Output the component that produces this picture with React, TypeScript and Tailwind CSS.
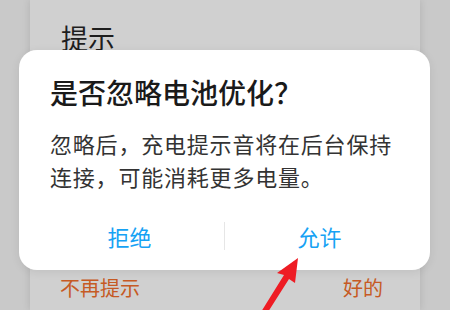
export default function App() {
  return (
    <div
      className="relative w-[450px] h-[310px] overflow-hidden bg-[#c9c9c9]"
      style={{ fontFamily: '"Noto Sans CJK SC", "Noto Sans", sans-serif' }}
    >
      {/* dialog behind */}
      <div className="ml-[30px] w-[390px] h-full bg-[#d0d0d0] shadow-[0_0_8px_rgba(0,0,0,0.12)] flex flex-col justify-between">
        <div className="pl-[31px] pt-[18px] text-[27px] leading-[40px] text-[#1e1e1e]">提示</div>
        <div className="flex justify-between pl-[30px] pr-[37px] pb-[9px] text-[20px] leading-[26px] text-[#c65a24]">
          <span>不再提示</span>
          <span>好的</span>
        </div>
      </div>

      {/* front dialog */}
      <div className="absolute left-[19px] top-[50px] w-[411px] h-[220px] rounded-[18px] bg-white flex flex-col shadow-[0_2px_10px_rgba(0,0,0,0.08)]">
        <div className="pl-[31px] pt-[23px] text-[28px] leading-[38px] font-medium text-[#1a1a1a]">是否忽略电池优化？</div>
        <div className="pl-[31px] pr-[20px] mt-[16px] text-[22px] leading-[33px] tracking-[0.8px] text-[#333333]">
          忽略后，充电提示音将在后台保持连接，可能消耗更多电量。
        </div>
        <div className="mt-auto mb-[20px] px-[16px] flex items-center text-[22px] leading-[28px] text-[#16a2f4]">
          <div className="flex-1 text-center">拒绝</div>
          <div className="w-px h-[28px] bg-[#e6e6e6]" />
          <div className="flex-1 text-center">允许</div>
        </div>
      </div>

      {/* red arrow */}
      <svg className="absolute left-0 top-0" width="450" height="310" viewBox="0 0 450 310">
        <polygon
          points="298,258 295,283 289,279 268,312 261,312 284,275 277,273"
          fill="#ee1c24"
        />
      </svg>
    </div>
  )
}
